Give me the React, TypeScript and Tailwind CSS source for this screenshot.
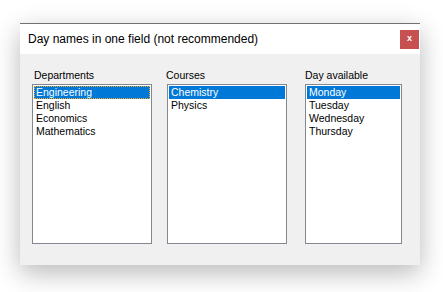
import React from "react";

interface ListProps {
  label: string;
  items: string[];
  width: string;
  focused?: boolean;
  labelOffset: string;
}

function ListColumn({ label, items, width, focused, labelOffset }: ListProps) {
  return (
    <div className={`flex flex-col ${width}`}>
      <span className={`text-[10.5px] leading-[13px] text-black ${labelOffset}`}>{label}</span>
      <div className="mt-[2px] h-[160px] border border-[#828790] bg-white p-[1px]">
        {items.map((item, i) => (
          <div
            key={item}
            className={`h-[13px] px-[2px] text-[10.5px] leading-[13px] ${
              i === 0 ? "bg-[#0078d7] text-white" : "text-black"
            } ${i === 0 && focused ? "outline-1 outline-dotted outline-[#f5a623] -outline-offset-1" : ""}`}
          >
            {item}
          </div>
        ))}
      </div>
    </div>
  );
}

export default function App() {
  return (
    <div className="w-[443px] h-[292px] bg-white pt-[23px] pl-[20px] overflow-hidden" style={{ fontFamily: '"Liberation Sans", Arial, sans-serif' }}>
      <div className="w-[400px] h-[242px] flex flex-col border-t border-[#707070] shadow-[0_8px_24px_rgba(0,0,0,0.28)]">
        {/* Title bar */}
        <div className="h-[30px] bg-white flex items-center justify-between pl-[8px] pr-[1px]">
          <span className="text-[12px] text-black">Day names in one field (not recommended)</span>
          <div className="w-[19px] h-[19px] bg-[#c75050] flex items-center justify-center text-white text-[9px] font-bold leading-none pb-[1px]">
            x
          </div>
        </div>

        {/* Body */}
        <div className="flex-1 bg-[#f0f0f0] flex pt-[15px] pl-[12px]">
          <ListColumn
            label="Departments"
            items={["Engineering", "English", "Economics", "Mathematics"]}
            width="w-[120px]"
            focused
            labelOffset="ml-[2px]"
          />
          <div className="w-[15px]" />
          <ListColumn
            label="Courses"
            items={["Chemistry", "Physics"]}
            width="w-[120px]"
            labelOffset="-ml-[1px]"
          />
          <div className="w-[18px]" />
          <ListColumn
            label="Day available"
            items={["Monday", "Tuesday", "Wednesday", "Thursday"]}
            width="w-[97px]"
            labelOffset="ml-0"
          />
        </div>
      </div>
    </div>
  );
}
